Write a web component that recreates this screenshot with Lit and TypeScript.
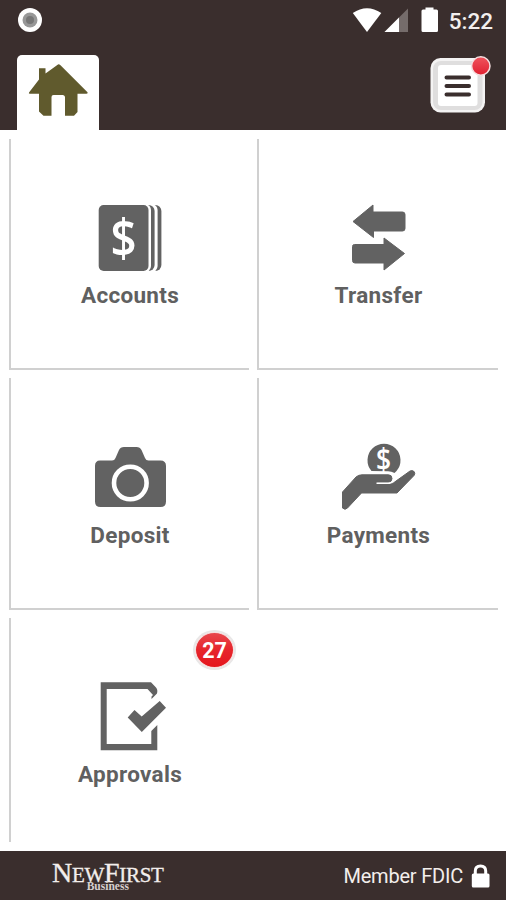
import { LitElement, html, css, svg, nothing } from "lit";
import { customElement, property } from "lit/decorators.js";

const icons = {
  accounts: svg`
    <rect x="100" y="205" width="61.4" height="66" rx="6" fill="#626262"/>
    <rect x="99" y="204" width="58.6" height="68" rx="6" fill="#fff"/>
    <rect x="99" y="205" width="55.6" height="66" rx="6" fill="#626262"/>
    <rect x="98" y="204" width="53" height="68" rx="6" fill="#fff"/>
    <rect x="98.7" y="205" width="49.8" height="66" rx="5" fill="#626262"/>
    <text class="dollar" transform="translate(123.6 256.500) scale(.88 1)" font-size="52">$</text>`,
  transfer: svg`
    <path d="M353 221.5 373 205V212H402.500Q405 212 405 214.500V228.500Q405 231 402.500 231H373.500V237.500Z"/>
    <path d="M404.500 253.500 384 238V244.500H354.500Q352.500 244.500 352.500 246.500V260.500Q352.500 263 355 263H384V270Z"/>`,
  deposit: svg`
    <path stroke="none" d="M100 460.500H112Q114.500 460.500 115.500 458L119 450Q120.300 447 124 447H136.500Q140 447 141.500 450L145 458Q146 460.500 148.500 460.500H160.500Q166 460.500 166 466V501.500Q166 507 160.500 507H100.500Q95 507 95 501.500V466Q95 460.500 100 460.500Z"/>
    <circle cx="130.300" cy="483" r="16.300" fill="none" stroke="#fff" stroke-width="4.600"/>`,
  payments: svg`
    <path stroke="none" d="M371.500 471A16.500 16.500 0 1 1 396.500 471L394.500 473Q391.500 471.300 388 471.300Z"/>
    <text class="dollar" transform="translate(383.600 469.500) scale(.88 1)" font-size="30">$</text>
    <path d="M342.500 492 356 477Q358.500 474.800 362 474.800H388.500Q392 475 392 478.600Q391.800 482 388.500 482.300H377V484H389.500Q394 483.500 397 480.300L410 471Q412.500 469.800 414.300 471.800Q415.400 473.600 414 475.500L397 493H361.500L347.500 508Q345 510.500 342.500 508Z"/>
    <path d="M376.500 483.200H389.500Q392.500 482.700 394 480" fill="none" stroke="#fff" stroke-width="1.500"/>`,
  approvals: svg`
    <path stroke="none" d="M100.700 682.300H151L156 687.500Q158 689.500 157 693.500L151.500 699V696.500L153 695 147.500 689H106.700V744H151.300V731L157.300 725V750.300H100.700Z"/>
    <path stroke="none" d="M127.700 717.500 134.500 710 141.700 716.500 159.700 701 166 707.700 141.800 732Z"/>`,
};

type IconName = keyof typeof icons;

@customElement("menu-tile")
class MenuTile extends LitElement {
  @property() label = "";
  @property() icon: IconName = "accounts";
  @property() box = "";
  @property() count = "";

  static styles = css`
    :host {
      display: flex;
      flex-direction: column;
      align-items: center;
      box-sizing: border-box;
      position: relative;
      padding-top: 61px;
      border-left: 2px solid #d0d0d0;
      border-bottom: 2px solid #d0d0d0;
    }
    :host([last]) { border-bottom: 0; }
    .icon {
      width: 80px;
      height: 75px;
      display: block;
      overflow: visible;
      fill: #626262;
      stroke: #626262;
      stroke-width: 1;
      stroke-linejoin: round;
    }
    .dollar {
      font-family: "Open Sans", sans-serif;
      font-weight: 600;
      text-anchor: middle;
      fill: #fff;
      stroke: none;
    }
    .icon rect { stroke: none; }
    .label {
      margin-top: 7px;
      font: 700 22.5px/26px Roboto, sans-serif;
      color: #606060;
      letter-spacing: 0.3px;
    }
    .count {
      position: absolute;
      top: 14px;
      right: 15px;
      width: 37px;
      height: 34px;
      border: 1px solid #f5dcdc;
      border-radius: 50%;
      box-shadow: 0 0 0 2px #e9e7e7;
      background: linear-gradient(#e8474d, #e6252c 50%, #e5161d);
      color: #fff;
      font: 700 21.5px/35px Roboto, sans-serif;
      text-align: center;
    }
    :host([middle]) .label { margin-top: 8px; }
  `;

  render() {
    return html`
      <svg class="icon" viewBox=${this.box}>${icons[this.icon]}</svg>
      <div class="label">${this.label}</div>
      ${this.count ? html`<div class="count">${this.count}</div>` : nothing}
    `;
  }
}

@customElement("app-root")
class AppRoot extends LitElement {
  static styles = css`
    :host {
      display: flex;
      flex-direction: column;
      height: 900px;
      background: #fff;
      font-family: Roboto, sans-serif;
    }
    svg { display: block; flex: none; }
    .header {
      height: 130px;
      background: #3a2e2d;
    }
    .status {
      display: flex;
      align-items: center;
      height: 40px;
      padding: 0 13px 0 17px;
      color: #fff;
    }
    .signals { margin-left: auto; }
    .time {
      margin: 1px 0 0 8px;
      font: 500 22.5px/26px Roboto, sans-serif;
      color: #f3efee;
    }
    .bar {
      display: flex;
      justify-content: space-between;
      align-items: flex-start;
      padding: 15px 16px 0 17px;
    }
    .tab {
      width: 82px;
      height: 75px;
      background: #fff;
      border-radius: 5px 5px 0 0;
    }
    .menu { margin-right: -3px; }
    .grid {
      flex: 1;
      display: grid;
      box-sizing: border-box;
      padding: 9px 8px 9px 9px;
      grid-template-columns: 240px 241px;
      grid-template-rows: 231px 232px 1fr;
      gap: 8px;
    }
    .footer {
      display: flex;
      align-items: center;
      justify-content: space-between;
      box-sizing: border-box;
      height: 49px;
      padding: 1px 16px 0 52px;
      background: #3a2e2d;
      color: #f3eeec;
    }
    .brand {
      display: flex;
      flex-direction: column;
      align-items: center;
      margin-bottom: 3px;
      font-family: "Liberation Serif", serif;
    }
    .name { font-size: 21px; line-height: 27px; white-space: nowrap; letter-spacing: -0.3px; -webkit-text-stroke: 0.3px #f3eeec; }
    .cap { font-size: 28px; }
    .unit { font-size: 11.5px; line-height: 10px; margin-top: -8px; font-weight: 700; color: #d6cfcd; }
    .member {
      display: flex;
      align-items: center;
      gap: 8px;
      font-size: 20px;
      letter-spacing: -0.2px;
    }
  `;

  render() {
    return html`
      <div class="header">
        <div class="status">
          <svg width="26" height="26" viewBox="17 7 26 26">
            <circle cx="30" cy="20" r="12" fill="#fff"/>
            <circle cx="30" cy="20" r="7.500" fill="#989898"/>
            <circle cx="30" cy="20" r="4" fill="#777"/>
          </svg>
          <svg class="signals" width="90" height="30" viewBox="350 5 90 30">
            <path d="M351.800 13Q366 3.500 380.300 13L366 32Z" fill="#fff"/>
            <path d="M407 8.500V32H383.500Z" fill="#756c6b"/>
            <path d="M398 17.500V32H383.500Z" fill="#fff"/>
            <path d="M424.500 7.500H432.500V9.500H435.500Q437 9.500 437 11V30.500Q437 32 435.500 32H422Q420.500 32 420.500 30.500V11Q420.500 9.500 422 9.500H424.500Z" fill="#fff"/>
          </svg>
          <div class="time">5:22</div>
        </div>
        <div class="bar">
          <div class="tab">
            <svg width="82" height="75" viewBox="17 55 82 75">
              <path d="M58 64.500 45.500 73.500V68.300H39V79.500L29 92.500Q28.300 93.800 30 93.800H39V111.500L43.500 115.800H51.500V97Q51.500 95 53.500 95H62.500Q65 95 65 97.500V115.800H74L77.500 112V93.800H86.500Q88.300 93.500 87.500 92.300L60.500 65.300Q58.800 63.700 58 64.500Z" fill="#605a2d"/>
            </svg>
          </div>
          <svg class="menu" width="64" height="60" viewBox="429 55 64 60">
            <defs>
              <linearGradient id="dot" x1="0" y1="0" x2="0" y2="1">
                <stop offset="0" stop-color="#f0545d"/><stop offset="1" stop-color="#e01f30"/>
              </linearGradient>
            </defs>
            <rect x="430.500" y="58" width="54.500" height="54.500" rx="10" fill="#f4f3f3"/>
            <rect x="433" y="61" width="49.500" height="49" rx="8" fill="#dfdede"/>
            <rect x="438" y="65" width="39.500" height="41" rx="3" fill="#fff"/>
            <path d="M446.500 77.500H469M446.500 86H469M446.500 94.500H469" stroke="#3a2e2d" stroke-width="4" stroke-linecap="round"/>
            <circle cx="480.800" cy="66" r="9.200" fill="url(#dot)" stroke="#f4dfe0" stroke-width="1.500"/>
          </svg>
        </div>
      </div>
      <div class="grid">
        <menu-tile label="Accounts" icon="accounts" box="90 200 80 75"></menu-tile>
        <menu-tile label="Transfer" icon="transfer" box="339 200 80 75"></menu-tile>
        <menu-tile middle label="Deposit" icon="deposit" box="90 439 80 75"></menu-tile>
        <menu-tile middle label="Payments" icon="payments" box="339 439 80 75"></menu-tile>
        <menu-tile last label="Approvals" icon="approvals" box="90 679 80 75" count="27"></menu-tile>
      </div>
      <div class="footer">
        <div class="brand">
          <div class="name"><span class="cap">N</span>EW<span class="cap">F</span>IRST</div>
          <div class="unit">Business</div>
        </div>
        <div class="member">
          <span>Member FDIC</span>
          <svg width="19" height="24" viewBox="471.500 863.500 19 24">
            <path d="M475.800 874V870.500Q475.800 865.500 481 865.500T486.200 870.500V874" fill="none" stroke="#fff" stroke-width="3"/>
            <rect x="472.300" y="873" width="17.700" height="14" rx="1.500" fill="#fff"/>
          </svg>
        </div>
      </div>
    `;
  }
}
